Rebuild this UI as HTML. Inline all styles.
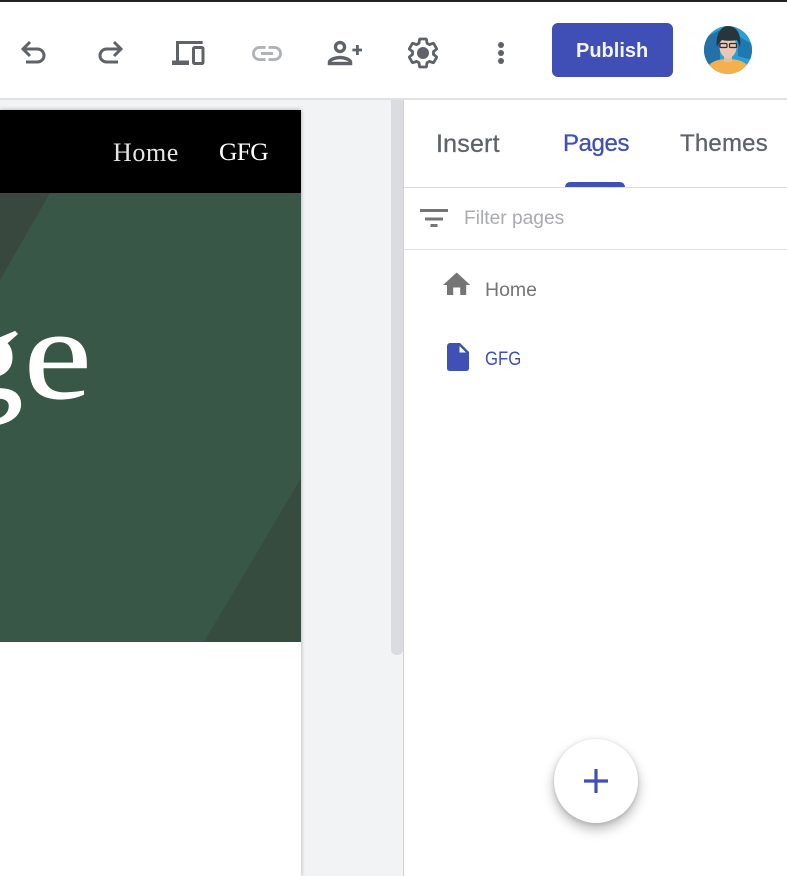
<!DOCTYPE html>
<html><head><meta charset="utf-8">
<style>
html,body{margin:0;padding:0;width:787px;height:876px;overflow:hidden;background:#f1f3f4;font-family:"Liberation Sans",sans-serif}
.abs,.t{position:absolute}
.t{white-space:nowrap}
svg{position:absolute;left:0;top:0}
</style></head><body>
<div class="abs" style="left:0;top:110px;width:301px;height:766px;background:#fff;box-shadow:0 0 4px rgba(0,0,0,.3)"></div>
<div class="abs" style="left:0;top:110px;width:301px;height:83px;background:#000"></div>
<div class="t" style="left:113px;top:137px;font:26px/32px 'Liberation Serif',serif;letter-spacing:.6px;color:#e4e4e4">Home</div>
<div class="t" style="left:219px;top:136px;font:25.5px/32px 'Liberation Serif',serif;letter-spacing:-.7px;color:#fff">GFG</div>
<div class="abs" style="left:0;top:193px;width:301px;height:449px;background:#385747;overflow:hidden">
<svg width="301" height="449"><polygon points="0,0 50,0 0,87" fill="#39483f"/><polygon points="301,285 301,449 204,449" fill="#364c3e"/></svg>
<div class="t" style="left:-52.700px;top:77px;font:130px/170px 'Liberation Serif',serif;color:#fff;transform:scaleX(1.18);transform-origin:0 0;-webkit-text-stroke:.6px #fff">ge</div>
</div>
<div class="abs" style="left:391px;top:100px;width:12px;height:555px;background:#dadce0;border-radius:0 0 5px 5px"></div>
<div class="abs" style="left:403px;top:99px;width:384px;height:777px;background:#fff;border-left:1px solid #cfd1d4;box-sizing:border-box"></div>
<div class="abs" style="left:404px;top:187px;width:383px;height:1px;background:#dadce0"></div>
<div class="abs" style="left:404px;top:249px;width:383px;height:1px;background:#dfe0e2"></div>
<div class="abs" style="left:565px;top:182px;width:60px;height:5px;background:#3f51b5;border-radius:5px 5px 0 0"></div>
<div class="t" style="left:436px;top:130px;font-size:25px;line-height:28px;letter-spacing:.2px;color:#5f6368;-webkit-text-stroke:.3px #5f6368">Insert</div>
<div class="t" style="left:563px;top:130px;font-size:24px;line-height:28px;letter-spacing:-.4px;color:#3f51b5;-webkit-text-stroke:.3px #3f51b5">Pages</div>
<div class="t" style="left:680px;top:130px;font-size:24px;line-height:28px;letter-spacing:.2px;color:#5f6368;-webkit-text-stroke:.3px #5f6368">Themes</div>
<div class="t" style="left:464px;top:208px;font-size:19.2px;line-height:22px;color:#a9abae">Filter pages</div>
<div class="t" style="left:485px;top:279px;font-size:19.5px;line-height:22px;color:#757575">Home</div>
<div class="t" style="left:485px;top:349px;font-size:19px;line-height:22px;transform:scaleX(.88);transform-origin:0 0;color:#3f51b5">GFG</div>
<div class="abs" style="left:0;top:0;width:787px;height:98px;background:#fff;border-bottom:2px solid #dfe1e3;box-sizing:content-box"></div>
<div class="abs" style="left:0;top:0;width:787px;height:2px;background:#222"></div>
<div class="abs" style="left:552px;top:23px;width:121px;height:54px;background:#3f4fb5;border-radius:6px"></div>
<div class="t" style="left:576px;top:39px;font-size:20px;line-height:24px;font-weight:700;color:#f4f5fb">Publish</div>
<div class="abs" style="left:554px;top:739px;width:84px;height:84px;border-radius:50%;background:#fff;box-shadow:0 6px 12px rgba(0,0,0,.28),0 1px 4px rgba(0,0,0,.14)"></div>
<svg width="787" height="876" viewBox="0 0 787 876">
<g fill="none" stroke="#5f6368" stroke-width="3">
<path d="M30 42L23 49l7 7M23 49h14.500a6.500 6.500 0 0 1 0 13H26"/>
<path d="M114 42L121 49l-7 7M121 49h-14.500a6.500 6.500 0 0 0 0 13H118"/>
<path d="M202.700 42.500H177.500V61"/>
<rect x="193.500" y="47.500" width="9.500" height="16" rx="1.200"/>
</g>
<rect x="172" y="60.500" width="17" height="4.500" fill="#5f6368"/>
<path transform="translate(249 35.500) scale(1.5)" fill="#b0b3b6" d="M3.900 12c0-1.710 1.390-3.100 3.100-3.100h4V7H7c-2.760 0-5 2.240-5 5s2.240 5 5 5h4v-1.900H7c-1.710 0-3.100-1.390-3.100-3.100zM8 13h8v-2H8v2zm9-6h-4v1.900h4c1.710 0 3.100 1.390 3.100 3.100s-1.390 3.100-3.100 3.100h-4V17h4c2.760 0 5-2.240 5-5s-2.240-5-5-5z"/>
<path transform="translate(362.500 35) scale(-1.500 1.500)" fill="#5f6368" stroke="#5f6368" stroke-width=".3" d="M15 12c2.210 0 4-1.790 4-4s-1.790-4-4-4-4 1.790-4 4 1.790 4 4 4zm0-6c1.100 0 2 .9 2 2s-.9 2-2 2-2-.9-2-2 .9-2 2-2zm0 8c-2.670 0-8 1.340-8 4v2h16v-2c0-2.660-5.330-4-8-4zm-6 4c.22-.72 3.310-2 6-2 2.700 0 5.800 1.290 6 2H9z"/>
<path d="M356 45h2.800v3.600h3.200v2.800h-3.200V55H356v-3.600h-3.600v-2.800h3.600z" fill="#5f6368"/>
<path transform="translate(406.200 36.200) scale(1.400)" fill="#fff" stroke="#5f6368" stroke-width="2" stroke-linejoin="round" d="M19.430 12.980c.04-.32.07-.64.07-.98 0-.34-.03-.66-.07-.98l2.110-1.650c.19-.15.24-.42.12-.64l-2-3.460c-.09-.16-.26-.25-.44-.25-.06 0-.12.01-.17.03l-2.490 1c-.52-.4-1.080-.73-1.690-.98l-.38-2.650C14.460 2.180 14.250 2 14 2h-4c-.25 0-.46.18-.49.42l-.38 2.650c-.61.25-1.170.59-1.690.98l-2.490-1c-.06-.02-.12-.03-.18-.03-.17 0-.34.09-.43.25l-2 3.460c-.13.22-.07.49.12.64l2.110 1.650c-.04.32-.07.65-.07.98 0 .33.03.66.07.98l-2.110 1.650c-.19.15-.24.42-.12.64l2 3.460c.09.16.26.25.44.25.06 0 .12-.01.17-.03l2.490-1c.52.4 1.080.73 1.690.98l.38 2.650c.03.24.24.42.49.42h4c.25 0 .46-.18.49-.42l.38-2.650c.61-.25 1.170-.59 1.690-.98l2.490 1c.06.02.12.03.18.03.17 0 .34-.09.43-.25l2-3.460c.12-.22.07-.49-.12-.64l-2.110-1.650z"/>
<circle cx="423" cy="53" r="6" fill="#5f6368"/>
<circle cx="501" cy="45" r="3" fill="#5f6368"/><circle cx="501" cy="53" r="3" fill="#5f6368"/><circle cx="501" cy="61" r="3" fill="#5f6368"/>
<clipPath id="av"><circle cx="728" cy="50" r="24"/></clipPath>
<g clip-path="url(#av)">
<rect x="704" y="26" width="48" height="48" fill="#2a9fd4"/>
<polygon points="704,38 720,30 720,62 704,68" fill="#2470a8"/>
<polygon points="738,36 752,44 752,60 738,56" fill="#1f78b0"/>
<path d="M704 76c1-13 12-17 24-17s23 4 24 17z" fill="#f5b04e"/>
<rect x="724" y="54" width="8" height="8" fill="#e3bfa6"/>
<ellipse cx="728" cy="47" rx="8.500" ry="11" fill="#e9c8b6"/>
<path d="M717 47c-2-12 4-21 11-21s14 6 12 21c-1-3-2-5-3-7-5 1-11 1-15 0-2 2-4 4-5 7z" fill="#26363a"/>
<g fill="none" stroke="#2f2f2f" stroke-width="1.200"><rect x="720" y="43.500" width="7" height="4" rx="1"/><rect x="729.500" y="43.500" width="7" height="4" rx="1"/></g>
</g>
<path d="M420 209h28v3h-28zM425 217.500h18v3h-18zM430.500 224h7v3h-7z" fill="#757575"/>
<path d="M456.700 272.500L443 285h4v10h6.200v-7.500h7V295h6v-10h4z" fill="#757575"/>
<path d="M450 343h10l9 9v16.500a2.500 2.500 0 0 1-2.500 2.500h-17a2.500 2.500 0 0 1-2.500-2.500v-22.500a3 3 0 0 1 3-3z" fill="#3f51b5"/>
<path d="M459.500 346v6.500h6.500z" fill="#fff"/>
<path d="M594.400 769h3.200v10.400H608v3.200h-10.400V793h-3.200v-10.400H584v-3.200h10.400z" fill="#3f51b5"/>
</svg>
</body></html>
